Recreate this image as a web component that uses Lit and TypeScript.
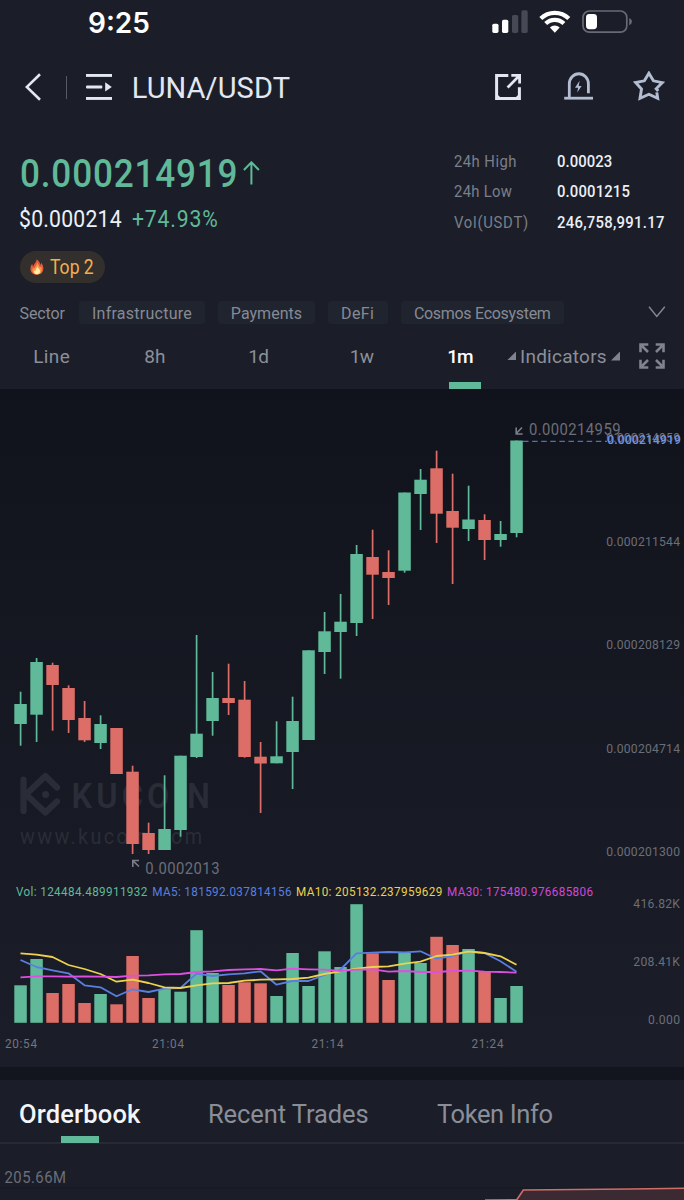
import { LitElement, html, svg, css } from "lit";
import { customElement } from "lit/decorators.js";
import { classMap } from "lit/directives/class-map.js";

const GREEN = "#60b998";
const RED = "#dd6e67";

/** One minute of trading in chart pixels: up, open/close top and bottom, wick top and bottom, volume bar top. */
type Candle = [boolean, number, number, number, number, number];

const candles: Candle[] = [
  [true, 704, 724, 691.7, 745.7, 985.3],
  [true, 662, 714.7, 658, 742, 959],
  [false, 665, 685, 662.7, 730.7, 993],
  [false, 688, 720, 685.3, 733, 984],
  [false, 718, 740.3, 701, 742, 1003],
  [true, 724, 743, 715.3, 749, 994],
  [false, 728, 774, 728, 774, 1004.3],
  [false, 771.7, 844, 765.7, 854, 956],
  [false, 833, 850, 822.7, 854, 998],
  [true, 829, 850, 775.3, 850, 989],
  [true, 755.7, 830, 755.7, 836.7, 991.7],
  [true, 733.7, 757, 635, 758, 930.2],
  [true, 698, 721, 672, 735.7, 973],
  [false, 698, 703, 663.7, 715, 985],
  [false, 699.7, 757, 681, 757.7, 982.3],
  [false, 756.7, 763.5, 742, 813, 983.3],
  [true, 756.3, 763.3, 721.3, 763.3, 996],
  [true, 721, 752, 696.7, 789, 953],
  [true, 650.3, 740, 650.3, 740, 986],
  [true, 631.3, 652, 612, 674, 951.3],
  [true, 621.7, 632, 594, 678.7, 967],
  [true, 554, 623, 545, 636, 904.2],
  [false, 557, 574.7, 529.7, 619, 953.3],
  [false, 572, 578, 550.3, 605, 980],
  [true, 492.5, 570.7, 492.5, 572.7, 953],
  [true, 479.7, 494, 469, 530, 963],
  [false, 468.3, 513.7, 450.7, 543, 936.8],
  [false, 511, 527.7, 473.7, 584, 945],
  [true, 519.5, 529, 485.7, 541, 949],
  [false, 520, 540, 514.3, 560, 972],
  [true, 534, 540, 521, 546.7, 998],
  [true, 440.5, 533, 440.5, 537.3, 986],
];

const ma5 = [960, 967, 970.3, 973.3, 985.3, 987.3, 996.3, 989.3, 992, 988.7, 988, 973.7, 976, 974.3, 973.3, 971.3, 984.7, 981, 981, 975, 969.5, 953.3, 952.7, 952, 952.3, 951.3, 958.7, 956, 951.3, 953, 961.3, 971.7];
const ma10 = [953.3, 954.7, 957, 965, 969, 974, 981.7, 979.7, 983, 987.3, 988, 985.3, 983.3, 983, 980.7, 979.7, 979.3, 979, 977.7, 974, 971.3, 968.7, 967, 966.3, 963.7, 961.7, 956, 954.7, 951.5, 953, 956.3, 964.7];
const ma30 = [977.3, 976.3, 976.3, 976.7, 976.3, 976.7, 977, 975.7, 975.3, 974.3, 974, 972, 971.3, 970, 969.3, 969, 970.3, 968.7, 969.3, 969.7, 971, 969.7, 969.3, 971.7, 971, 972, 972, 971, 970.7, 971.7, 972, 972.7];

const cx = (i: number) => 20.5 + 16 * i;
const line = (ys: number[]) => ys.map((y, i) => `${cx(i)},${y}`).join(" ");

/** Condensed label that fills the span x0..x1 on baseline y. */
const NARROW = 0.9;
const label = (s: string, x0: number, x1: number, y: number, cls: string) =>
  svg`<text class=${cls} transform=${`translate(${x0} ${y}) scale(${NARROW} 1)`} textLength=${(x1 - x0) / NARROW}>${s}</text>`;

@customElement("kline-chart")
class KlineChart extends LitElement {
  static styles = css`
    :host { display: block; height: 678px; }
    svg { display: block; }
    text { font-family: Roboto, sans-serif; }
    .axis { font-size: 13.5px; fill: #6b6e78; }
    .time { font-size: 13px; fill: #72757f; }
    .mark { font-size: 16.5px; fill: #6b6e78; }
    .now { font-size: 13.5px; fill: #6f93e0; font-weight: 500; }
    .vol { font-size: 13px; fill: #60b998; }
    .ma5 { font-size: 13px; fill: #5a7fe0; }
    .ma10 { font-size: 13px; fill: #ecd24e; }
    .ma30 { font-size: 13px; fill: #d048d8; }
    .brand { font-size: 36px; font-weight: 600; fill: #2a2d37; }
    .site { font-size: 22px; fill: #2a2d37; }
    .mline { fill: none; stroke-width: 1.8; stroke-linejoin: round; }
  `;

  render() {
    return html`<svg width="684" height="678" viewBox="0 389 684 678">
      <defs>
        <linearGradient id="bg" x1="0" y1="0" x2="0" y2="1">
          <stop offset="0" stop-color="#11131c" />
          <stop offset="1" stop-color="#1b1e29" />
        </linearGradient>
      </defs>
      <rect y="389" width="684" height="678" fill="url(#bg)" />
      <g fill="none" stroke="#2a2d37" stroke-width="6.2" stroke-linecap="round" stroke-linejoin="round">
        <path d="M23.5 779.5V811M57 787.5L45.4 776L26 794.4L45.4 812.5L57 801.5" />
        <circle cx="45.6" cy="794.6" r="3.5" fill="#2a2d37" stroke="none" />
      </g>
      ${label("KUCOIN", 71.5, 210, 808, "brand")}
      ${label("www.kucoin.com", 20, 202, 844, "site")}
      ${candles.map(([up, t, b, wt, wb, v], i) => svg`
        <g fill=${up ? GREEN : RED}>
          <rect x=${cx(i) - 0.75} y=${wt} width="1.7" height=${wb - wt} />
          <rect x=${cx(i) - 6.2} y=${t} width="12.5" height=${b - t} />
          <rect x=${cx(i) - 6.2} y=${v} width="12.5" height=${1022.8 - v} />
        </g>`)}
      <line x1="523" y1="441.3" x2="607" y2="441.3" stroke="#4a74b8" stroke-width="1.2" stroke-dasharray="5.5 3.6" />
      <path d="M522 427.5L516.3 433.5M516.2 427.5V434H522.6" fill="none" stroke="#7b7e87" stroke-width="1.6" />
      <path d="M139 866.5L133 860.8M132.8 867V860.5H139" fill="none" stroke="#7b7e87" stroke-width="1.6" />
      ${label("0.000214959", 529, 620.5, 434.7, "mark")}
      ${label("0.0002013", 145.3, 219.5, 874.4, "mark")}
      ${label("0.000214959", 606.3, 680, 442, "axis")}
      ${label("0.000214919", 607.3, 681, 444, "now")}
      ${label("0.000211544", 606.3, 680, 546, "axis")}
      ${label("0.000208129", 606.3, 680, 649.3, "axis")}
      ${label("0.000204714", 606.3, 680, 752.9, "axis")}
      ${label("0.000201300", 606.3, 680, 856.4, "axis")}
      ${label("416.82K", 633.3, 680, 907.7, "axis")}
      ${label("208.41K", 633.3, 680, 966, "axis")}
      ${label("0.000", 648, 680, 1024, "axis")}
      ${label("Vol: 124484.489911932", 16, 147.3, 896.3, "vol")}
      ${label("MA5: 181592.037814156", 152.3, 291.5, 896.3, "ma5")}
      ${label("MA10: 205132.237959629", 296, 442.3, 896.3, "ma10")}
      ${label("MA30: 175480.976685806", 447, 593, 896.3, "ma30")}
      <polyline class="mline" stroke="#5a7fe0" points=${line(ma5)} />
      <polyline class="mline" stroke="#ecd24e" points=${line(ma10)} />
      <polyline class="mline" stroke="#dc4fe0" points=${line(ma30)} />
      ${label("20:54", 5, 37, 1048.3, "time")}
      ${label("21:04", 152, 184, 1048.3, "time")}
      ${label("21:14", 311.5, 343.5, 1048.3, "time")}
      ${label("21:24", 471.5, 503.5, 1048.3, "time")}
    </svg>`;
  }
}

@customElement("status-bar")
class StatusBar extends LitElement {
  static styles = css`
    :host { display: flex; justify-content: space-between; height: 45px; padding: 0 51px 0 88px; }
    .clock { font: 600 28px/46.4px Inter, sans-serif; color: #fff; }
    svg { display: block; }
  `;
  render() {
    return html`<span class="clock">9:25</span>
      <svg width="143" height="45" viewBox="490 0 143 45">
        <rect x="492.3" y="23.7" width="6.2" height="9.2" rx="1.6" fill="#fff" />
        <rect x="502" y="19.7" width="6.3" height="13.2" rx="1.6" fill="#fff" />
        <rect x="512" y="15" width="6.2" height="17.9" rx="1.6" fill="#474a55" />
        <rect x="521.4" y="10.3" width="6.3" height="22.6" rx="1.6" fill="#474a55" />
        <g fill="none" stroke="#fff" stroke-width="4.2">
          <path d="M540.8 18.6A20 20 0 0 1 568.8 18.6" />
          <path d="M545.7 23.6A13 13 0 0 1 563.9 23.6" />
        </g>
        <path d="M549.9 27.6A7 7 0 0 1 559.7 27.6L554.8 32.8Z" fill="#fff" />
        <rect x="583" y="11" width="43.8" height="21.2" rx="6.4" fill="none" stroke="#686b75" stroke-width="1.7" />
        <rect x="586" y="14" width="11" height="15.2" rx="3.4" fill="#fff" />
        <path d="M629.2 18V25.2Q632 24 632 21.6T629.2 18Z" fill="#686b75" />
      </svg>`;
  }
}

@customElement("pair-nav")
class PairNav extends LitElement {
  static styles = css`
    :host { display: flex; align-items: center; height: 84px; padding: 0 19px 0 25px; color: #e3e7f2; }
    svg { display: block; }
    .rule { width: 1.5px; height: 23px; margin: 0 19px 0 24.7px; background: #565a66; }
    .pair { margin: 2px auto 0 19.5px; font-size: 29px; letter-spacing: 0.1px; }
    .actions { display: flex; align-items: center; gap: 40px; }
  `;
  render() {
    return html`
      <svg width="16" height="28" viewBox="25 73 16 28"><path d="M40 74.3L26.8 87L40 99.8" fill="none" stroke="currentColor" stroke-width="2.6" /></svg>
      <span class="rule"></span>
      <svg width="26" height="28" viewBox="86 73 26 28" fill="currentColor">
        <rect x="86" y="74" width="26" height="2.9" /><rect x="86" y="85.6" width="16.3" height="2.9" rx="1" />
        <rect x="86" y="97" width="26" height="2.9" /><path d="M105.2 82.3L111.8 87L105.2 91.6Z" />
      </svg>
      <span class="pair">LUNA/USDT</span>
      <div class="actions">
        <svg width="30" height="30" viewBox="493 72 30 30" fill="none" stroke="currentColor" stroke-width="3">
          <path d="M508.3 75.5H496.6V98.4H519.4V87.2" />
          <path d="M496.6 94.8L500.3 98.4M515.8 98.4L519.4 94.8" stroke-width="1.6" />
          <path d="M511.3 75.3H519.6V83.5M507.6 87.6L519.2 75.8" stroke-width="2.8" />
        </svg>
        <svg width="30" height="30" viewBox="563 72 30 30" fill="none" stroke="#b3bdd1" stroke-width="2.8">
          <path d="M564.2 98.2H593" /><path d="M569.3 98V84A9.5 10.2 0 0 1 588.4 84V93.3" />
          <path d="M579.6 80.8L575 87.8H578.1L577.2 92.6L581.6 86H578.7Z" fill="#b3bdd1" stroke="none" />
        </svg>
        <svg width="32" height="32" viewBox="633 71 32 32" fill="none" stroke="#b3bdd1" stroke-width="2.9">
          <path d="M656.8 92.4L657.7 98.4L648.9 94.3L640 98.4L641.5 89L635.6 82.5L644.4 80.8L648.9 73.2L653.4 80.8L662.4 82.6L656.2 88.8L658.2 91" />
        </svg>
      </div>`;
  }
}

@customElement("price-summary")
class PriceSummary extends LitElement {
  static styles = css`
    :host { display: flex; justify-content: space-between; height: 154.5px; padding: 0 19px 0 19.5px; box-sizing: border-box; }
    svg { display: block; }
    .main { padding-top: 20px; }
    .narrow { display: block; transform: scaleX(0.9); transform-origin: 0 50%; white-space: nowrap; }
    .last { display: flex; align-items: center; height: 50px; color: #60b998; font-size: 39px; font-weight: 500; }
    .last span { width: 223.7px; letter-spacing: 0.92px; }
    .fiat { display: flex; align-items: center; height: 40.6px; font-size: 23.5px; color: #eef0f6; }
    .usd { width: 113px; margin-left: -0.7px; letter-spacing: 0.27px; }
    .change { width: 87px; letter-spacing: 0.93px; color: #60b998; }
    .rank { display: flex; align-items: center; width: 85px; height: 32.5px; margin-top: 11.4px; box-sizing: border-box; padding-left: 10px; gap: 6.3px; border-radius: 17px; background: #332f2d; color: #f2b04c; font-size: 19.5px; }
    .rank .narrow { width: 48px; }
    .stats { display: grid; grid-template-columns: 102.3px 108.5px; grid-auto-rows: 30.3px; align-items: center; align-content: start; margin: 17.5px 0 0; font-size: 16.5px; }
    dt { color: #7b7f8a; }
    dd { margin: 0; color: #eceff5; font-weight: 500; }
    .high { letter-spacing: 0.5px; }
    .low { letter-spacing: 0.33px; }
    .vol { letter-spacing: 0.81px; }
    .v1 { letter-spacing: 0.1px; }
    .v2 { letter-spacing: 0.17px; }
    .v3 { letter-spacing: 0.32px; }
  `;
  render() {
    return html`
      <div class="main">
        <div class="last"><span class="narrow">0.000214919</span>
          <svg width="17" height="26" viewBox="243 160 17 26"><path d="M251.4 183.5V161.5M243.9 169L251.4 161.3L258.9 169" fill="none" stroke="currentColor" stroke-width="2" /></svg>
        </div>
        <div class="fiat"><span class="narrow usd">$0.000214</span><span class="narrow change">+74.93%</span></div>
        <div class="rank">
          <svg width="14" height="16" viewBox="0 0 14 16">
            <path d="M6.6 0.2C9.6 2.2 10 4.4 10.3 6C10.9 5.5 11.2 4.6 11.2 3.8C13.2 6 13.6 8.4 13.3 10.6C12.8 14 10.2 15.8 7 15.8S0.9 14 0.5 10.8C0.2 8.4 1 6.3 2.3 4.7C2.4 6 2.7 6.9 3.4 7.6C3.6 4.6 6.5 3.6 6.6 0.2Z" fill="#e4593a" />
            <path d="M7.3 3.6C8.3 6 9.2 7 10 8.6C10.5 8.3 11 7.8 11.2 7.2C12.6 10.8 11.6 15.4 7 15.4S1.6 11.5 3 8.6C3.4 9.2 3.8 9.6 4.4 9.8C4.6 7.6 7 6.6 7.3 3.6Z" fill="#f79a45" />
            <path d="M7.2 7.6C8 9.6 9.3 9.8 9.8 11C10.6 13 9.6 15.2 7 15.2S3.6 13.2 4.2 11.6C4.6 11.8 5 12 5.5 12C5.4 10.3 7 9.6 7.2 7.6Z" fill="#fff0a8" />
          </svg>
          <span class="narrow">Top 2</span>
        </div>
      </div>
      <dl class="stats">
        <dt class="narrow high">24h High</dt><dd class="narrow v1">0.00023</dd>
        <dt class="narrow low">24h Low</dt><dd class="narrow v2">0.0001215</dd>
        <dt class="narrow vol">Vol(USDT)</dt><dd class="narrow v3">246,758,991.17</dd>
      </dl>`;
  }
}

@customElement("sector-row")
class SectorRow extends LitElement {
  static styles = css`
    :host { display: flex; align-items: center; height: 22.5px; margin-top: 17.5px; padding: 0 18px 0 19.5px; font-size: 16px; color: #868a95; }
    .name { width: 59.5px; margin-top: 2px; letter-spacing: -0.1px; }
    .chips { display: flex; gap: 13px; margin-right: auto; }
    .chip { box-sizing: border-box; height: 22.5px; border-radius: 3px; background: #20242e; text-align: center; line-height: 25.4px; white-space: nowrap; }
    .infra { width: 126px; letter-spacing: 0.25px; }
    .pay { width: 97px; letter-spacing: 0.04px; }
    .defi { width: 59.5px; letter-spacing: 0.4px; }
    .cosmos { width: 163.5px; letter-spacing: -0.3px; }
    svg { display: block; }
  `;
  render() {
    return html`<span class="name">Sector</span>
      <div class="chips">
        <span class="chip infra">Infrastructure</span><span class="chip pay">Payments</span>
        <span class="chip defi">DeFi</span><span class="chip cosmos">Cosmos Ecosystem</span>
      </div>
      <svg width="18" height="12" viewBox="648 306 18 12"><path d="M649 306.8L656.8 316.4L664.8 306.8" fill="none" stroke="#868a95" stroke-width="1.4" /></svg>`;
  }
}

@customElement("period-tabs")
class PeriodTabs extends LitElement {
  static styles = css`
    :host { display: grid; grid-template-columns: repeat(5, 103.3px) 1fr 45px; height: 65px; font-size: 19px; color: #8b8f9a; }
    .tab { display: flex; align-items: center; justify-content: center; position: relative; }
    .t0 { letter-spacing: 0.38px; }
    .t1 { letter-spacing: 0.1px; }
    .t2, .t3 { letter-spacing: -0.6px; }
    .active { color: #fff; font-weight: 500; letter-spacing: -1.2px; padding-right: 10px; }
    .active::after { content: ""; position: absolute; left: 35.8px; bottom: 0; width: 32px; height: 6.5px; background: #60b998; }
    .corner { position: absolute; right: 0; top: 27px; }
    .ind { display: flex; align-items: center; gap: 4px; padding-left: 3.5px; letter-spacing: 0.25px; }
    .full { align-self: center; margin-top: -1px; }
    svg { display: block; fill: #7f838d; }
  `;
  render() {
    const tri = svg`<path d="M9.4 0V9.4H0Z" />`;
    return html`${["Line", "8h", "1d", "1w", "1m"].map((t, i) => html`
        <div class=${classMap({ tab: true, [`t${i}`]: true, active: i === 4 })}>
          <span>${t}</span>${i === 4 ? html`<svg class="corner" width="9.4" height="9.4">${tri}</svg>` : ""}
        </div>`)}
      <div class="ind"><span>Indicators</span><svg width="9.4" height="9.4">${tri}</svg></div>
      <svg class="full" width="26" height="26" viewBox="0 0 26 26">
        <g fill="none" stroke="#7f838d" stroke-width="2.6">
          <path d="M9.3 1.5H1.5V9.3M2 2L9 9" /><path d="M16.7 1.5H24.5V9.3M24 2L17 9" />
          <path d="M1.5 16.7V24.5H9.3M2 24L9 17" /><path d="M16.7 24.5H24.5V16.7M24 24L17 17" />
        </g>
      </svg>`;
  }
}

@customElement("detail-tabs")
class DetailTabs extends LitElement {
  static styles = css`
    :host { display: flex; height: 62px; padding-left: 19px; border-bottom: 2px solid #272a34; font-size: 25.5px; line-height: 68px; color: #8a8e99; white-space: nowrap; }
    .tab { position: relative; }
    .book { width: 189px; color: #f3f5fa; font-weight: 500; letter-spacing: 0.18px; }
    .book::after { content: ""; position: absolute; left: 42px; bottom: -1.5px; width: 38.3px; height: 6.7px; background: #60b998; }
    .trades { width: 229px; letter-spacing: -0.09px; }
    .info { letter-spacing: -0.4px; }
  `;
  render() {
    return html`<span class="tab book">Orderbook</span><span class="tab trades">Recent Trades</span><span class="tab info">Token Info</span>`;
  }
}

@customElement("depth-chart")
class DepthChart extends LitElement {
  static styles = css`
    :host { display: block; height: 56px; overflow: hidden; }
    svg { display: block; }
    text { font: 16.5px Roboto, sans-serif; fill: #6a6e79; }
  `;
  render() {
    return html`<svg width="684" height="56" viewBox="0 1144 684 56">
      <rect y="1187.5" width="684" height="1" fill="#161922" />
      ${label("205.66M", 4.5, 66, 1183, "")}
      <path d="M485 1200L516.8 1199.8L523.3 1190L630 1189L684 1188.3V1200Z" fill="#3c2a33" />
      <path d="M485 1200L516.8 1199.8L523.3 1190L630 1189L684 1188.3" fill="none" stroke="#cf6d69" stroke-width="1.6" />
    </svg>`;
  }
}

@customElement("app-root")
class AppRoot extends LitElement {
  static styles = css`
    :host { display: flex; flex-direction: column; width: 684px; height: 1200px; overflow: hidden; background: #1b1e28; font-family: Roboto, sans-serif; }
    .band { height: 13px; background: #12151e; }
  `;
  render() {
    return html`<status-bar></status-bar><pair-nav></pair-nav><price-summary></price-summary><sector-row></sector-row>
      <period-tabs></period-tabs><kline-chart></kline-chart><div class="band"></div>
      <detail-tabs></detail-tabs><depth-chart></depth-chart>`;
  }
}
